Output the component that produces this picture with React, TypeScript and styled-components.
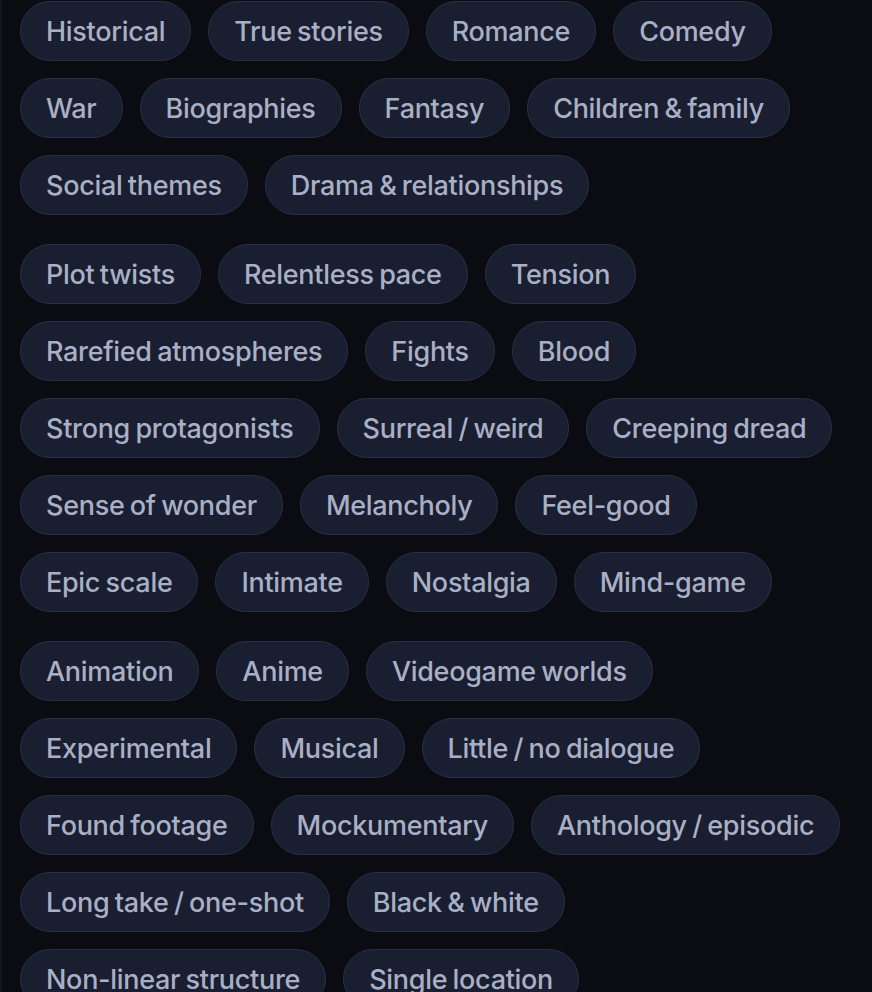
import React from "react";
import styled, { createGlobalStyle } from "styled-components";

const GlobalStyle = createGlobalStyle`
    html, body {
        margin: 0;
        padding: 0;
        background: #0a0c11;
    }
    body {
        font-family: Inter, "Noto Sans", "Liberation Sans", sans-serif;
    }
`;

const groups: string[][] = [
    [
        "Historical",
        "True stories",
        "Romance",
        "Comedy",
        "War",
        "Biographies",
        "Fantasy",
        "Children & family",
        "Social themes",
        "Drama & relationships",
    ],
    [
        "Plot twists",
        "Relentless pace",
        "Tension",
        "Rarefied atmospheres",
        "Fights",
        "Blood",
        "Strong protagonists",
        "Surreal / weird",
        "Creeping dread",
        "Sense of wonder",
        "Melancholy",
        "Feel-good",
        "Epic scale",
        "Intimate",
        "Nostalgia",
        "Mind-game",
    ],
    [
        "Animation",
        "Anime",
        "Videogame worlds",
        "Experimental",
        "Musical",
        "Little / no dialogue",
        "Found footage",
        "Mockumentary",
        "Anthology / episodic",
        "Long take / one-shot",
        "Black & white",
        "Non-linear structure",
        "Single location",
    ],
];

export default function App() {
    return (
        <>
            <GlobalStyle />
            <Page>
                {groups.map((group, i) => (
                    <ChipGroup key={i}>
                        {group.map((label) => (
                            <Chip key={label} type="button">
                                {label}
                            </Chip>
                        ))}
                    </ChipGroup>
                ))}
            </Page>
        </>
    );
}

const Page = styled.div`
    box-sizing: border-box;
    height: 992px;
    padding: 1px 20px 0 18px;
    border-left: 2px solid #12151c;
    display: flex;
    flex-direction: column;
    gap: 29px;
    overflow: hidden;
`;

const ChipGroup = styled.div`
    display: flex;
    flex-wrap: wrap;
    gap: 17px;
    max-width: 830px;
`;

const Chip = styled.button`
    box-sizing: border-box;
    height: 60px;
    padding: 0 25px;
    border-radius: 30px;
    border: 1.5px solid #293046;
    background: #191e30;
    color: #a9b0c6;
    font-family: Inter, "Noto Sans", "Liberation Sans", sans-serif;
    font-size: 27px;
    font-weight: 500;
    letter-spacing: -0.3px;
    word-spacing: -1.5px;
    white-space: nowrap;
    cursor: pointer;
    flex: none;
`;
